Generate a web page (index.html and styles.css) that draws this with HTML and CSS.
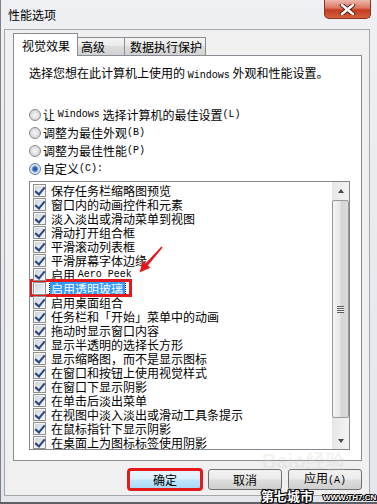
FILE: index.html
```html
<!DOCTYPE html>
<html>
<head>
	<meta charset="utf-8">
	<title>性能选项</title>
	<link rel="stylesheet" href="styles.css">
</head>
<body>
	<div class="window">
		<div class="titlebar">
			<span class="title">性能选项</span>
			<div class="close">
				<svg width="17" height="11" viewBox="0 0 17 11"><path d="M3 1 L14 10 M14 1 L3 10" stroke="#5a1a10" stroke-width="4.5" stroke-linecap="round"/><path d="M3 1 L14 10 M14 1 L3 10" stroke="#fff" stroke-width="2.6" stroke-linecap="round"/></svg>
			</div>
		</div>
		<div class="client">
			<div class="tabs">
				<div class="tab tab1 active">视觉效果</div>
				<div class="tab tab2">高级</div>
				<div class="tab tab3">数据执行保护</div>
			</div>
			<div class="panel">
				<p class="intro">选择您想在此计算机上使用的 <span class="lat">Windows</span> 外观和性能设置。</p>
				<ul class="radios">
					<li><span class="rd"></span>让 <span class="lat">Windows</span> 选择计算机的最佳设置<span class="lat">(L)</span></li>
					<li><span class="rd"></span>调整为最佳外观<span class="lat">(B)</span></li>
					<li><span class="rd"></span>调整为最佳性能<span class="lat">(P)</span></li>
					<li><span class="rd on"></span>自定义<span class="lat">(C):</span></li>
				</ul>
				<div class="listbox">
					<ul class="items">
						<li><span class="cb on"></span>保存任务栏缩略图预览</li>
						<li><span class="cb on"></span>窗口内的动画控件和元素</li>
						<li><span class="cb on"></span>淡入淡出或滑动菜单到视图</li>
						<li><span class="cb on"></span>滑动打开组合框</li>
						<li><span class="cb on"></span>平滑滚动列表框</li>
						<li><span class="cb on"></span>平滑屏幕字体边缘</li>
						<li><span class="cb on"></span>启用 <span class="lat">Aero Peek</span></li>
						<li class="marked"><span class="cb"></span><span class="sel">启用透明玻璃</span></li>
						<li><span class="cb on"></span>启用桌面组合</li>
						<li><span class="cb on"></span>任务栏和「开始」菜单中的动画</li>
						<li><span class="cb on"></span>拖动时显示窗口内容</li>
						<li><span class="cb on"></span>显示半透明的选择长方形</li>
						<li><span class="cb on"></span>显示缩略图，而不是显示图标</li>
						<li><span class="cb on"></span>在窗口和按钮上使用视觉样式</li>
						<li><span class="cb on"></span>在窗口下显示阴影</li>
						<li><span class="cb on"></span>在单击后淡出菜单</li>
						<li><span class="cb on"></span>在视图中淡入淡出或滑动工具条提示</li>
						<li><span class="cb on"></span>在鼠标指针下显示阴影</li>
						<li><span class="cb on"></span>在桌面上为图标标签使用阴影</li>
					</ul>
					<div class="scrollbar">
						<div class="sbtn"><span class="up"></span></div>
						<div class="track">
							<div class="thumb"><span class="grip"></span></div>
						</div>
						<div class="sbtn"><span class="down"></span></div>
					</div>
				</div>
			</div>
			<div class="buttons">
				<button class="btn default marked">确定</button>
				<button class="btn">取消</button>
				<button class="btn">应用<span class="lat">(A)</span></button>
			</div>
		</div>
	</div>

	<!-- red annotation arrow -->
	<svg class="arrow" width="377" height="504" viewBox="0 0 377 504">
		<polygon points="161.4,246.4 162.6,247.6 147.9,265.6 150.3,267.8 139.5,272.5 142.9,261.3 145.4,263.4" fill="#e8161b"/>
	</svg>

	<div class="wm-baidu">Bai<span class="paw">✿</span>经验</div>
	<div class="wm">
		<span class="wm-cn">第七城市</span>
		<span class="wm-url">WWW.TH7.CN</span>
	</div>
</body>
</html>
```

FILE: styles.css
```css
/* base */
* {
	box-sizing: border-box;
}
body {
	margin: 0;
	width: 377px;
	height: 504px;
	overflow: hidden;
	position: relative;
	background: #5c6066;
	font-family: "Noto Sans CJK SC", sans-serif;
	font-size: 12px;
	line-height: 14px;
	color: #000;
}
ul {
	list-style: none;
	margin: 0;
	padding: 0;
}
.lat {
	font-family: "Liberation Mono", monospace;
	font-size: 10px;
}

/* window frame */
.window {
	height: 502px;
	border-left: 1px solid #7d8187;
	background: linear-gradient(#eef0f3, #e3e6ea);
}
.titlebar {
	display: flex;
	height: 29px;
}
.title {
	flex: 1;
	padding-left: 7px;
	line-height: 30px;
}
.close {
	width: 47px;
	height: 19px;
	margin-right: 6px;
	border: 1px solid #8a3323;
	border-top: none;
	border-radius: 0 0 5px 5px;
	background: linear-gradient(#ecb9ac, #dc7560 45%, #c53c22 55%, #d2603f);
	display: flex;
	align-items: center;
	justify-content: center;
}

/* dialog body */
.client {
	width: 366px;
	height: 467px;
	margin-left: 3px;
	border: 1px solid #a4a8ae;
	background: #f0f0f0;
}

/* tabs */
.tabs {
	display: flex;
	align-items: flex-end;
	padding: 3px 0 0 8px;
	height: 25px;
}
.tab {
	height: 18px;
	border: 1px solid #898c95;
	border-bottom: none;
	background: linear-gradient(#f4f4f4, #ebebeb 45%, #dcdcdc 50%, #d2d2d2);
	line-height: 16px;
	padding-top: 1px;
	white-space: nowrap;
}
.tab1 {
	width: 65px;
	padding-left: 8px;
}
.tab2 {
	width: 48px;
	margin-left: -1px;
	padding-left: 3px;
}
.tab3 {
	width: 82px;
	margin-left: -1px;
	padding-left: 5px;
}
.tab.active {
	height: 23px;
	margin-bottom: -1px;
	background: #fff;
	position: relative;
	z-index: 1;
	line-height: 18px;
	padding-top: 3px;
}

/* tab page */
.panel {
	width: 349px;
	height: 406px;
	margin-left: 8px;
	border: 1px solid #898c95;
	background: #fff;
	padding-left: 15px;
}
.intro {
	margin: 10px 0 0;
	line-height: 14px;
	white-space: nowrap;
}
.radios {
	margin-top: 23px;
}
.radios li {
	display: flex;
	align-items: center;
	height: 18px;
	line-height: 14px;
	white-space: pre;
}
.rd {
	width: 12px;
	height: 12px;
	margin-right: 2px;
	border-radius: 50%;
	border: 1px solid #8a8a8a;
	background: radial-gradient(circle, #f6f6f6 0, #e4e4e4 3px, #cfcfcf 6px);
	flex: none;
}
.rd.on {
	border-color: #5b7fae;
	background: radial-gradient(circle, #1d4f9c 0, #3569b8 2px, #8cb2e6 3px, #e8e8e8 4px, #d2d2d2 6px);
}

/* list of effects */
.listbox {
	display: flex;
	width: 321px;
	height: 269px;
	margin-top: 3px;
	border: 1px solid #828790;
	overflow: hidden;
}
.items {
	flex: 1;
	padding: 1px 0 0 1px;
}
.items li {
	display: flex;
	align-items: center;
	height: 14px;
	line-height: 13px;
	padding-left: 2px;
	white-space: pre;
}
.items li.marked {
	width: 99px;
	outline: 3px solid #e3191c;
	outline-offset: -1px;
}
.cb {
	position: relative;
	width: 13px;
	height: 13px;
	margin-right: 5px;
	border: 1px solid #8e8f8f;
	background: linear-gradient(135deg, #cbd3de, #f4f6f9);
	box-shadow: inset 0 0 0 1px #f7f7f7;
	flex: none;
}
.cb.on::after {
	content: "";
	position: absolute;
	left: 3px;
	top: 0;
	width: 4px;
	height: 8px;
	border: solid #2b4381;
	border-width: 0 2px 2px 0;
	transform: rotate(40deg);
}
.sel {
	background: #3399ff;
	color: #fff;
	padding: 0 2px 0 1px;
	margin-left: -1px;
	outline: 1px dotted #1a1a1a;
	line-height: 13px;
}

/* scrollbar */
.scrollbar {
	width: 17px;
	display: flex;
	flex-direction: column;
	background: linear-gradient(to right, #e6e6e6, #f4f4f4);
}
.sbtn {
	height: 17px;
	display: flex;
	align-items: center;
	justify-content: center;
	flex: none;
}
.up {
	border-left: 3.5px solid transparent;
	border-right: 3.5px solid transparent;
	border-bottom: 4px solid #454545;
}
.down {
	border-left: 3.5px solid transparent;
	border-right: 3.5px solid transparent;
	border-top: 4px solid #454545;
}
.track {
	flex: 1;
	padding: 1px 0 0 0;
}
.thumb {
	height: 218px;
	border: 1px solid #979797;
	border-radius: 2px;
	background: linear-gradient(to right, #f3f3f3, #e8e8e8 45%, #d5d5d5 55%, #dcdcdc);
	display: flex;
	align-items: center;
	justify-content: center;
}
.grip {
	width: 7px;
	height: 7px;
	background: repeating-linear-gradient(#5d5d5d 0 1px, #f0f0f0 1px 2px);
}

/* dialog buttons */
.buttons {
	display: flex;
	justify-content: flex-end;
	gap: 6px;
	margin-top: 8px;
	padding-right: 7px;
}
.btn {
	width: 74px;
	height: 21px;
	padding: 0;
	border: 1px solid #707070;
	border-radius: 3px;
	background: linear-gradient(#f2f2f2, #ebebeb 48%, #dddddd 52%, #cfcfcf);
	font-family: "Noto Sans CJK SC", sans-serif;
	font-size: 12px;
	line-height: 14px;
	color: #000;
	white-space: pre;
}
.btn.default {
	border-color: #3c7fb1;
	background: linear-gradient(#eaf6fd, #d9f0fc 48%, #bee6fd 52%, #a7d9f5);
}
.btn.marked {
	outline: 3px solid #e3191c;
	outline-offset: -2px;
}

/* annotation overlays */
.arrow {
	position: absolute;
	left: 0;
	top: 0;
	pointer-events: none;
}
.wm-baidu {
	position: absolute;
	left: 262px;
	top: 450px;
	font-family: "Liberation Sans", sans-serif;
	font-size: 20px;
	line-height: 22px;
	font-weight: bold;
	color: rgba(210, 210, 210, 0.3);
	white-space: nowrap;
}
.paw {
	font-size: 16px;
}
.wm {
	position: absolute;
	left: 261px;
	top: 488px;
	display: flex;
	align-items: center;
	gap: 10px;
	white-space: nowrap;
}
.wm-cn {
	font-size: 13px;
	font-weight: bold;
	color: #fff;
	line-height: 15px;
	text-shadow: -1px 0 #000, 1px 0 #000, 0 -1px #000, 0 1px #000, 1px 1px #000, -1px -1px #000, 1px -1px #000, -1px 1px #000;
}
.wm-url {
	font-family: "Liberation Sans", sans-serif;
	font-size: 8px;
	line-height: 10px;
	font-weight: bold;
	color: #fff;
	margin-top: 4px;
	text-shadow: -1px 0 #000, 1px 0 #000, 0 -1px #000, 0 1px #000, 1px 1px #000, -1px -1px #000;
}
```
